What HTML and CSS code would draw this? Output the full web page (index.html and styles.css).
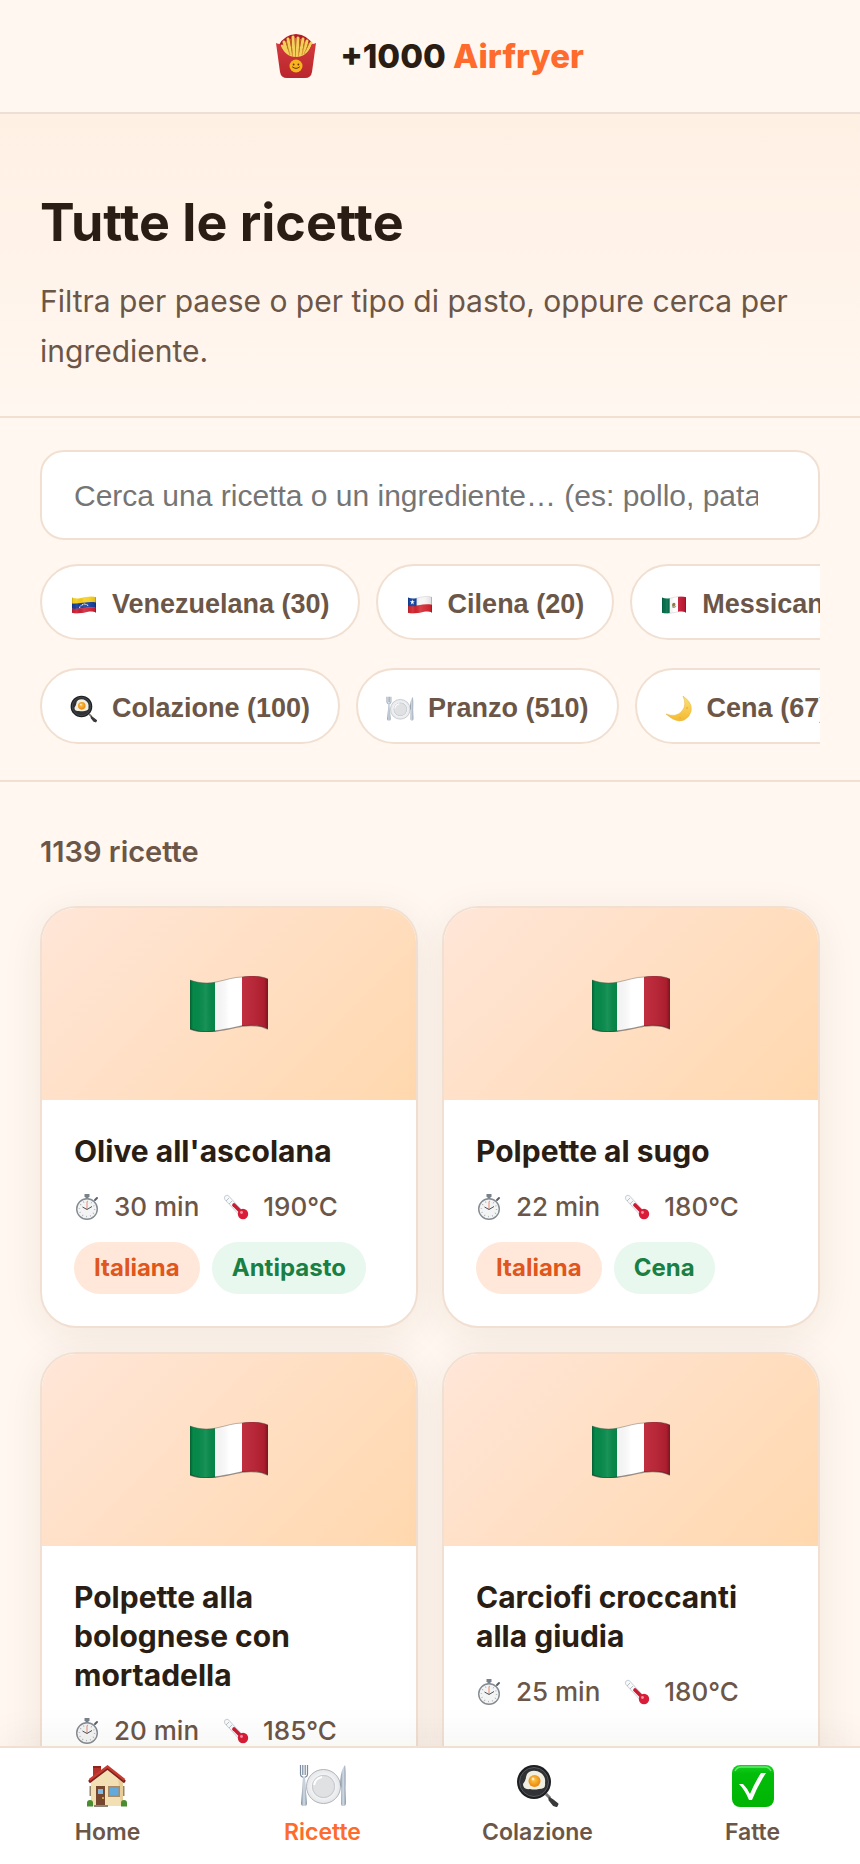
FILE: index.html
```html
<!DOCTYPE html>
<html lang="it">
<head>
<meta charset="utf-8">
<meta name="viewport" content="width=device-width, initial-scale=1">
<title>+1000 Airfryer – Tutte le ricette</title>
<link rel="stylesheet" href="styles.css">
</head>
<body class="app">

<svg class="sprite" aria-hidden="true">
  <defs>
    <clipPath id="wave">
      <path d="M0 4C8 7 17 8 26 6C36 4 44 1 52 1C62 -1 71 0 78 3V53C70 49 61 49 52 50C43 52 35 54 26 55C17 57 8 56 0 53Z"/>
    </clipPath>
    <linearGradient id="folds">
      <stop offset="0" stop-color="#000" stop-opacity=".3"/>
      <stop offset=".04" stop-color="#000" stop-opacity="0"/>
      <stop offset=".2" stop-color="#fff" stop-opacity=".08"/>
      <stop offset=".31" stop-color="#000" stop-opacity=".04"/>
      <stop offset=".5" stop-color="#fff" stop-opacity=".12"/>
      <stop offset=".68" stop-color="#fff" stop-opacity=".06"/>
      <stop offset=".95" stop-color="#000" stop-opacity=".08"/>
      <stop offset="1" stop-color="#000" stop-opacity=".35"/>
    </linearGradient>
    <linearGradient id="carton" x2="0" y2="1">
      <stop offset="0" stop-color="#d23a3d"/>
      <stop offset="1" stop-color="#b9262c"/>
    </linearGradient>
    <linearGradient id="leaf" x2="0" y2="1">
      <stop offset="0" stop-color="#17d324"/>
      <stop offset=".2" stop-color="#02bd0a"/>
      <stop offset="1" stop-color="#00b404"/>
    </linearGradient>
    <linearGradient id="moonlight" x2="0" y2="1">
      <stop offset="0" stop-color="#fbe27a"/>
      <stop offset="1" stop-color="#f4b92e"/>
    </linearGradient>
    <linearGradient id="steel" x2="1">
      <stop offset="0" stop-color="#7f8b99"/>
      <stop offset=".5" stop-color="#d3deea"/>
      <stop offset="1" stop-color="#8793a2"/>
    </linearGradient>
    <radialGradient id="yolk" cx=".45" cy=".4">
      <stop offset="0" stop-color="#ffc94a"/>
      <stop offset="1" stop-color="#ec8f13"/>
    </radialGradient>
    <radialGradient id="plate">
      <stop offset="0" stop-color="#e9eaec"/>
      <stop offset=".58" stop-color="#dcdee1"/>
      <stop offset=".64" stop-color="#c3c6ca"/>
      <stop offset=".7" stop-color="#f1f2f4"/>
      <stop offset="1" stop-color="#e4e6e9"/>
    </radialGradient>
  </defs>

  <symbol id="flag-it" viewBox="0 0 78 56">
    <g clip-path="url(#wave)">
      <path fill="#06894a" d="M0 0h26v56H0z"/><path fill="#fff" d="M25 0h28v56H25z"/><path fill="#bb2133" d="M52 0h26v56H52z"/>
      <path fill="url(#folds)" d="M0 0h78v56H0z"/>
    </g>
    <path fill="none" stroke="#574b43" stroke-opacity=".4" d="M0 4C8 7 17 8 26 6C36 4 44 1 52 1C62 -1 71 0 78 3"/>
    <path fill="none" stroke="#302a28" stroke-opacity=".5" stroke-width="1.4" d="M0 53C8 56 17 57 26 55C35 54 43 52 52 50C61 49 70 49 78 53"/>
  </symbol>
  <symbol id="flag-ve" viewBox="0 0 78 56">
    <g clip-path="url(#wave)">
      <path fill="#f7cf1b" d="M0 0h78v24H0z"/>
      <path fill="#153f9d" d="M0 23C26 26 52 14 78 20V38C52 32 26 44 0 40z"/>
      <path fill="#cf2036" d="M0 39C26 43 52 31 78 37V56H0z"/>
      <path d="M24 37Q39 16 54 32" fill="none" stroke="#fff" stroke-width="3.4" stroke-dasharray="4 2"/>
      <path fill="url(#folds)" d="M0 0h78v56H0z"/>
    </g>
  </symbol>
  <symbol id="flag-cl" viewBox="0 0 78 56">
    <g clip-path="url(#wave)">
      <path fill="#f5f5f5" d="M0 0h78v56H0z"/>
      <path fill="#d3262f" d="M0 31C26 33 52 21 78 27V56H0z"/>
      <path fill="#1745a2" d="M0 0h28v31Q14 33 0 31z"/>
      <path fill="#fff" d="m14 10 2 6h6l-5 4 2 6-5-4-5 4 2-6-5-4h6z"/>
      <path fill="url(#folds)" d="M0 0h78v56H0z"/>
    </g>
    <path fill="none" stroke="#8a8480" stroke-opacity=".5" stroke-width="1.4" d="M26 6C36 4 44 1 52 1C62 -1 71 0 78 3V28"/>
  </symbol>
  <symbol id="flag-mx" viewBox="0 0 78 56">
    <g clip-path="url(#wave)">
      <path fill="#05704b" d="M0 0h26v56H0z"/><path fill="#fff" d="M25 0h28v56H25z"/><path fill="#c51a35" d="M52 0h26v56H52z"/>
      <path fill="#8a6a3a" d="M34 23q7-5 10 2l-2 8-7 1q-4-5-1-11z"/><path d="M33 34q7 6 13-2" fill="none" stroke="#5d8a4a" stroke-width="3"/>
      <path fill="url(#folds)" d="M0 0h78v56H0z"/>
    </g>
    <path fill="none" stroke="#8a8480" stroke-opacity=".5" stroke-width="1.4" d="M26 6C36 4 44 1 52 1M26 55C35 54 43 52 52 50"/>
  </symbol>

  <symbol id="fries" viewBox="0 0 40 44">
    <path fill="#b01d22" d="M3 11Q8 1 20 0Q32 1 37 11L34 24H6z"/>
    <g stroke="#f3cf5b" stroke-width="3" stroke-linecap="round">
      <path d="M8 8l4 13M12 5l3 17M17 3l1 20M22 4l-1 19M27 5l-3 17M31 7l-4 14M35 9l-5 11M6 12l5 8"/>
    </g>
    <g stroke="#c98b21" stroke-width=".8"><path d="M10 7l4 14M14.500 5l2 17M19.500 4v19M24.500 5l-2 17M29 7l-3 14M33 9l-5 11"/></g>
    <path fill="url(#carton)" d="M0 9q2 1 4 1q5 13 16 13T36 10q2 0 4-1L36 38q-1 6-7 6H11q-6 0-7-6z"/>
    <circle cx="20" cy="32" r="6.500" fill="#f6b51f"/>
    <circle cx="17.600" cy="30.500" r=".9" fill="#6b3010"/><circle cx="22.400" cy="30.500" r=".9" fill="#6b3010"/>
    <path d="M16.500 33q3.500 3 7 0" fill="none" stroke="#6b3010" stroke-width="1" stroke-linecap="round"/>
  </symbol>

  <symbol id="pan" viewBox="0 0 44 44">
    <path d="M30 30l4 4" stroke="#777" stroke-width="3"/>
    <path d="M33.500 34l3 2 5 4-1 2-3-1-4-5z" fill="#3a3a3c" stroke="#3a3a3c" stroke-width="2" stroke-linejoin="round"/>
    <circle cx="18" cy="18" r="17" fill="#1d1e20"/>
    <circle cx="18" cy="18" r="14.500" fill="#303235" stroke="#55585c"/>
    <path fill="#f1efe2" d="M13 8q6-3 12 1 5 4 4 10 1 6-6 6-5 1-9 0-7 1-7-5 3-4 3-7 0-3 3-5z"/>
    <circle cx="18.500" cy="17" r="6" fill="url(#yolk)"/>
    <circle cx="17" cy="15" r="1.400" fill="#fff" fill-opacity=".7"/>
  </symbol>

  <symbol id="dish" viewBox="0 0 48 44">
    <circle cx="24.500" cy="22.500" r="17" fill="url(#plate)" stroke="#a9adb3" stroke-width=".9"/>
    <circle cx="24.500" cy="22.500" r="11" fill="#dfe1e3" stroke="#c2c5c9" stroke-width=".7"/>
    <path d="M15 21a10 10 0 0 1 8-8" fill="none" stroke="#fff" stroke-width="2"/>
    <path d="M1.500 1v9q0 3 3.500 3.500q3.500-.5 3.500-3.500V1M3.800 1v10M6.200 1v10" fill="none" stroke="#7b8b9f" stroke-width="1.200"/>
    <path fill="url(#steel)" d="M4 13h2l.7 11 1.300 15q.3 3-3 3t-3-3l1.300-15z"/>
    <path fill="url(#steel)" d="M46 1q1 5 .5 23l.5 15q0 3-2.600 3T42 39l.3-15-1-3Q41 7 46 1z"/>
  </symbol>

  <symbol id="moon" viewBox="0 0 28 28">
    <path fill="url(#moonlight)" stroke="#e6b43c" stroke-width=".5" d="M18 1Q31 10 24 21Q15 32 1 19Q11 23 17 16Q22 10 18 1z"/>
    <circle cx="22" cy="13" r="1" fill="#eeb53b"/><circle cx="15" cy="23" r="1.200" fill="#eeb53b"/>
  </symbol>

  <symbol id="stopwatch" viewBox="0 0 26 28">
    <path fill="#79818a" d="M10.500 1h5v3h-1v4h-3V4h-1z"/>
    <path d="M21 7l2-2" stroke="#596069" stroke-width="2" stroke-linecap="round"/>
    <circle cx="13" cy="16" r="10.300" fill="#f3f4f4" stroke="#858b92" stroke-width="1.400"/>
    <circle cx="13" cy="16" r="7.600" fill="none" stroke="#a3a8ad" stroke-width="1.400" stroke-dasharray=".8 3.180"/>
    <path d="M13 16V8.500" stroke="#e58d74" stroke-width="1"/>
    <path d="M8.500 14l4.500 2.500 5-3" fill="none" stroke="#4b5056" stroke-width="1"/>
  </symbol>

  <symbol id="thermometer" viewBox="0 0 26 26">
    <path d="M4 4l13 14" stroke="#c9d0d6" stroke-width="6" stroke-linecap="round"/>
    <path d="M4 4l12 13" stroke="#f7f9fa" stroke-width="4.400" stroke-linecap="round"/>
    <path d="M3 7l3-3M6 10l3-3M9 12l2-2" stroke="#aab2b8" stroke-width=".8"/>
    <path d="M11 11l9 9" stroke="#cb1b32" stroke-width="3.600" stroke-linecap="round"/>
    <circle cx="20" cy="20" r="5.200" fill="#d91c38"/>
    <circle cx="18.500" cy="18.500" r="1.400" fill="#ff93a0"/>
  </symbol>

  <symbol id="house" viewBox="0 0 44 44">
    <path fill="#b5322b" d="M7 2h8v12H7z"/><path fill="#8f231e" d="M7 2h8v2H7z"/>
    <path fill="#f3dfb4" d="M5 17L22 4l15 13v25H5z"/>
    <path fill="#e8cd98" d="M32 13l5 4v25h-2z"/>
    <path d="M3 18L21.500 4 39 18" fill="none" stroke="#7c201c" stroke-width="3"/>
    <path d="M3.500 16L21.500 2.500 38.500 16" fill="none" stroke="#c63a31" stroke-width="2.400"/>
    <path fill="#76472e" d="M10 22h9v20h-9z"/><path fill="#7fb9e2" d="M12 25h5v5h-5z"/><circle cx="17" cy="34" r="1" fill="#e8c04b"/>
    <path fill="#a98a63" d="M22 22h12v11H22z"/><path fill="#62a9dc" d="M23.500 23.500h9v8h-9z"/>
    <path fill="#97866c" d="M3.500 22H5v10H3.500zM37 22h1.500v10H37z"/>
    <path fill="#8d8479" d="M8 41h14v2H8z"/>
    <circle cx="4" cy="39" r="3" fill="#4b8c31"/><circle cx="38" cy="39" r="3" fill="#4b8c31"/><path fill="#4b8c31" d="M1 39h6v3.500H1zM35 39h6v3.500h-6z"/>
  </symbol>

  <symbol id="check" viewBox="0 0 44 44">
    <rect x="1" y="1" width="42" height="42" rx="8" fill="url(#leaf)"/>
    <path d="M4 7Q6 3 10 3H34Q38 3 40 7" fill="none" stroke="#7cf083" stroke-width="1.400" stroke-opacity=".8"/>
    <path fill="#fff" d="M8 20h4q4 4 7 10Q24 18 30 9h5Q27 21 21 36h-3Q14 26 8 20z"/>
  </symbol>
</svg>

<div class="scroller">
  <header class="topbar">
    <a class="brand" href="#">
      <svg class="brand-icon" aria-hidden="true"><use href="#fries"/></svg>
      <span>+1000 <span class="brand-accent">Airfryer</span></span>
    </a>
  </header>

  <main>
    <section class="hero">
      <h1 class="hero-title">Tutte le ricette</h1>
      <p class="hero-text">Filtra per paese o per tipo di pasto, oppure cerca per ingrediente.</p>
    </section>

    <section class="filters" aria-label="Filtri">
      <input class="search" type="text" aria-label="Cerca una ricetta" placeholder="Cerca una ricetta o un ingrediente… (es: pollo, patate)">
      <div class="chips">
        <button class="chip" type="button"><svg class="chip-icon chip-flag" aria-hidden="true"><use href="#flag-ve"/></svg>Venezuelana (30)</button>
        <button class="chip" type="button"><svg class="chip-icon chip-flag" aria-hidden="true"><use href="#flag-cl"/></svg>Cilena (20)</button>
        <button class="chip" type="button"><svg class="chip-icon chip-flag" aria-hidden="true"><use href="#flag-mx"/></svg>Messicana</button>
      </div>
      <div class="chips">
        <button class="chip" type="button"><svg class="chip-icon" aria-hidden="true"><use href="#pan"/></svg>Colazione (100)</button>
        <button class="chip" type="button"><svg class="chip-icon" aria-hidden="true"><use href="#dish"/></svg>Pranzo (510)</button>
        <button class="chip" type="button"><svg class="chip-icon" aria-hidden="true"><use href="#moon"/></svg>Cena (67)</button>
      </div>
    </section>

    <section class="results">
      <p class="count">1139 ricette</p>
      <div class="grid">
        <article class="card">
          <div class="card-media"><svg class="card-flag" aria-hidden="true"><use href="#flag-it"/></svg></div>
          <div class="card-body">
            <h2 class="card-title">Olive all'ascolana</h2>
            <div class="meta">
              <span class="meta-item"><svg class="meta-icon" aria-hidden="true"><use href="#stopwatch"/></svg>30 min</span>
              <span class="meta-item"><svg class="meta-icon" aria-hidden="true"><use href="#thermometer"/></svg>190°C</span>
            </div>
            <div class="tags"><span class="tag">Italiana</span><span class="tag tag-meal">Antipasto</span></div>
          </div>
        </article>
        <article class="card">
          <div class="card-media"><svg class="card-flag" aria-hidden="true"><use href="#flag-it"/></svg></div>
          <div class="card-body">
            <h2 class="card-title">Polpette al sugo</h2>
            <div class="meta">
              <span class="meta-item"><svg class="meta-icon" aria-hidden="true"><use href="#stopwatch"/></svg>22 min</span>
              <span class="meta-item"><svg class="meta-icon" aria-hidden="true"><use href="#thermometer"/></svg>180°C</span>
            </div>
            <div class="tags"><span class="tag">Italiana</span><span class="tag tag-meal">Cena</span></div>
          </div>
        </article>
        <article class="card">
          <div class="card-media"><svg class="card-flag" aria-hidden="true"><use href="#flag-it"/></svg></div>
          <div class="card-body">
            <h2 class="card-title">Polpette alla bolognese con mortadella</h2>
            <div class="meta">
              <span class="meta-item"><svg class="meta-icon" aria-hidden="true"><use href="#stopwatch"/></svg>20 min</span>
              <span class="meta-item"><svg class="meta-icon" aria-hidden="true"><use href="#thermometer"/></svg>185°C</span>
            </div>
          </div>
        </article>
        <article class="card">
          <div class="card-media"><svg class="card-flag" aria-hidden="true"><use href="#flag-it"/></svg></div>
          <div class="card-body">
            <h2 class="card-title">Carciofi croccanti alla giudia</h2>
            <div class="meta">
              <span class="meta-item"><svg class="meta-icon" aria-hidden="true"><use href="#stopwatch"/></svg>25 min</span>
              <span class="meta-item"><svg class="meta-icon" aria-hidden="true"><use href="#thermometer"/></svg>180°C</span>
            </div>
          </div>
        </article>
      </div>
    </section>
  </main>
</div>

<nav class="tabbar" aria-label="Principale">
  <a class="tab" href="#"><svg class="tab-icon" aria-hidden="true"><use href="#house"/></svg>Home</a>
  <a class="tab tab-active" href="#" aria-current="page"><svg class="tab-icon" aria-hidden="true"><use href="#dish"/></svg>Ricette</a>
  <a class="tab" href="#"><svg class="tab-icon" aria-hidden="true"><use href="#pan"/></svg>Colazione</a>
  <a class="tab" href="#"><svg class="tab-icon" aria-hidden="true"><use href="#check"/></svg>Fatte</a>
</nav>

</body>
</html>
```

FILE: styles.css
```css
:root {
  --bg: #fff7f0;
  --ink: #2a1d14;
  --muted: #6b5648;
  --accent: #ff6b2c;
  --line: #f1e0d2;
}

* {
  box-sizing: border-box;
}

.app {
  margin: 0;
  height: 100vh;
  display: flex;
  flex-direction: column;
  background: var(--bg);
  color: var(--ink);
  font-family: Inter, "Noto Sans", sans-serif;
}

.sprite {
  position: absolute;
  width: 0;
  height: 0;
}

.scroller {
  flex: 1;
  min-height: 0;
  overflow: hidden auto;
  scrollbar-width: none;
}

.topbar {
  display: flex;
  justify-content: center;
  padding: 32px 40px;
  border-bottom: 2px solid #eddfd5;
}

.brand {
  display: flex;
  align-items: center;
  gap: 24px;
  color: inherit;
  font-size: 33px;
  font-weight: 800;
  line-height: 48px;
  text-decoration: none;
}

.brand-icon {
  width: 40px;
  height: 44px;
}

.brand-accent {
  color: var(--accent);
}

.hero {
  padding: 76px 40px 40px;
  background: linear-gradient(#fff0e4, var(--bg));
  border-bottom: 2px solid var(--line);
}

.hero-title {
  margin: 0 0 20px;
  font-size: 52px;
  font-weight: 700;
  line-height: 66px;
}

.hero-text {
  margin: 0;
  color: var(--muted);
  font-size: 30px;
  line-height: 50px;
}

.filters {
  display: flex;
  flex-direction: column;
  padding: 32px 40px 36px;
  border-bottom: 2px solid var(--line);
}

.search {
  width: 100%;
  height: 90px;
  margin-bottom: 24px;
  padding: 2px 60px 0 32px;
  border: 2px solid var(--line);
  border-radius: 24px;
  background: #fff;
  color: var(--ink);
  font-family: "Liberation Sans", Arial, sans-serif;
  font-size: 30px;
}

.search::placeholder {
  color: #757575;
}

.chips {
  display: flex;
  gap: 16px;
  overflow: auto hidden;
  scrollbar-width: none;
}

.chips + .chips {
  margin-top: 28px;
}

.chip {
  flex: none;
  display: flex;
  align-items: center;
  gap: 14px;
  height: 76px;
  padding: 5px 28px 0;
  border: 2px solid var(--line);
  border-radius: 38px;
  background: #fff;
  color: var(--muted);
  font-family: "Liberation Sans", Arial, sans-serif;
  font-size: 27px;
  font-weight: 700;
}

.chip-icon {
  width: 28px;
  height: 28px;
}

.chip-flag {
  padding: 0 2px;
}

.results {
  padding: 48px 40px;
}

.count {
  margin: 0 0 32px;
  color: var(--muted);
  font-size: 29px;
  font-weight: 600;
  line-height: 44px;
}

.grid {
  display: grid;
  grid-template-columns: repeat(2, minmax(0, 1fr));
  gap: 24px;
}

.card {
  overflow: hidden;
  border: 2px solid var(--line);
  border-radius: 36px;
  background: #fff;
  box-shadow: 0 8px 40px rgba(90, 50, 20, 0.08);
}

.card-media {
  display: flex;
  align-items: center;
  justify-content: center;
  height: 192px;
  background: linear-gradient(135deg, #ffe6d8, #ffd8ae);
}

.card-flag {
  width: 78px;
  height: 56px;
}

.card-body {
  display: flex;
  flex-direction: column;
  gap: 16px;
  padding: 32px;
}

.card-title {
  margin: 0;
  font-size: 30px;
  font-weight: 700;
  line-height: 39px;
}

.meta {
  display: flex;
  gap: 24px;
  color: var(--muted);
  font-size: 26px;
  font-weight: 500;
  line-height: 39px;
}

.meta-item {
  display: flex;
  align-items: center;
  gap: 14px;
}

.meta-icon {
  width: 26px;
  height: 28px;
}

.tags {
  display: flex;
  gap: 12px;
}

.tag {
  padding: 0 20px;
  border-radius: 26px;
  background: #ffe8da;
  color: #e0561b;
  font-size: 24px;
  font-weight: 700;
  line-height: 52px;
}

.tag-meal {
  background: #e8f8ef;
  color: #1a7f42;
}

.tabbar {
  position: relative;
  display: grid;
  grid-template-columns: repeat(4, 1fr);
  padding: 16px 0;
  border-top: 2px solid var(--line);
  background: #fff;
  box-shadow: 0 -8px 40px rgba(60, 30, 10, 0.05);
}

.tab {
  display: flex;
  flex-direction: column;
  align-items: center;
  gap: 8px;
  color: var(--muted);
  font-size: 23px;
  font-weight: 600;
  line-height: 32px;
  text-decoration: none;
}

.tab-active {
  color: var(--accent);
}

.tab-icon {
  width: 48px;
  height: 44px;
}
```
